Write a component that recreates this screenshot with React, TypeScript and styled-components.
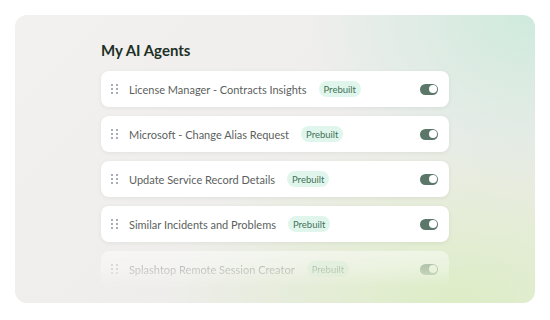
import React from "react";
import styled, { createGlobalStyle } from "styled-components";

const Global = createGlobalStyle`
  html, body { margin: 0; padding: 0; background: #ffffff; }
  body { font-family: "Lato", "Noto Sans", sans-serif; }
`;

const Page = styled.div`
  width: 550px;
  height: 320px;
  padding: 15px;
  box-sizing: border-box;
`;

const Panel = styled.div`
  width: 520px;
  height: 288px;
  border-radius: 12px;
  overflow: hidden;
  box-sizing: border-box;
  padding: 25px 86px 0 86px;
  background:
    radial-gradient(ellipse 55% 75% at 100% 0%, rgba(207, 234, 221, 1), rgba(207, 234, 221, 0) 80%),
    radial-gradient(ellipse 70% 75% at 85% 100%, rgba(221, 237, 198, 1), rgba(221, 237, 198, 0) 80%),
    linear-gradient(135deg, #f2f1f0 0%, #eeedeb 60%, #ebebe7 100%);
`;

const Title = styled.h1`
  margin: 0 0 11px 0;
  font-size: 15px;
  line-height: 20px;
  font-weight: 700;
  color: #1d3126;
`;

const List = styled.div`
  display: flex;
  flex-direction: column;
  gap: 9px;
`;

const Row = styled.div<{ $faded?: boolean }>`
  display: flex;
  align-items: center;
  height: 36px;
  padding: 0 11px 0 10px;
  border-radius: 8px;
  background: #ffffff;
  box-shadow: 0 1px 4px rgba(40, 50, 40, 0.07);
  box-sizing: border-box;
  ${(p) =>
    p.$faded &&
    `
    opacity: 0.55;
    box-shadow: none;
    -webkit-mask-image: linear-gradient(to bottom, rgba(0,0,0,0.85) 0%, rgba(0,0,0,0.55) 50%, rgba(0,0,0,0) 100%);
    mask-image: linear-gradient(to bottom, rgba(0,0,0,0.85) 0%, rgba(0,0,0,0.55) 50%, rgba(0,0,0,0) 100%);
  `}
`;

const Handle = styled.span`
  display: grid;
  grid-template-columns: repeat(2, 2px);
  grid-template-rows: repeat(3, 2px);
  gap: 2px 3px;
  margin-right: 11px;
  width: 7px;
  & > i {
    display: block;
    width: 2px;
    height: 2px;
    border-radius: 1px;
    background: #8c92a3;
  }
`;

const Name = styled.span`
  font-size: 11px;
  color: #5c5f5e;
  white-space: nowrap;
`;

const Badge = styled.span`
  margin-left: 12px;
  height: 16px;
  padding: 0 5px;
  border-radius: 8px;
  background: #e0f6ec;
  color: #447259;
  font-size: 9.5px;
  font-weight: 400;
  display: inline-flex;
  align-items: center;
`;

const Toggle = styled.span`
  margin-left: auto;
  width: 18px;
  height: 11px;
  border-radius: 6px;
  background: #5b776a;
  position: relative;
  &::after {
    content: "";
    position: absolute;
    right: 1.5px;
    top: 1.5px;
    width: 8px;
    height: 8px;
    border-radius: 50%;
    background: #ffffff;
  }
`;

const agents = [
  "License Manager - Contracts Insights",
  "Microsoft - Change Alias Request",
  "Update Service Record Details",
  "Similar Incidents and Problems",
  "Splashtop Remote Session Creator",
];

export default function App() {
  return (
    <>
      <Global />
      <Page>
        <Panel>
          <Title>My AI Agents</Title>
          <List>
            {agents.map((a, i) => (
              <Row key={a} $faded={i === agents.length - 1}>
                <Handle>
                  <i />
                  <i />
                  <i />
                  <i />
                  <i />
                  <i />
                </Handle>
                <Name>{a}</Name>
                <Badge>Prebuilt</Badge>
                <Toggle />
              </Row>
            ))}
          </List>
        </Panel>
      </Page>
    </>
  );
}
